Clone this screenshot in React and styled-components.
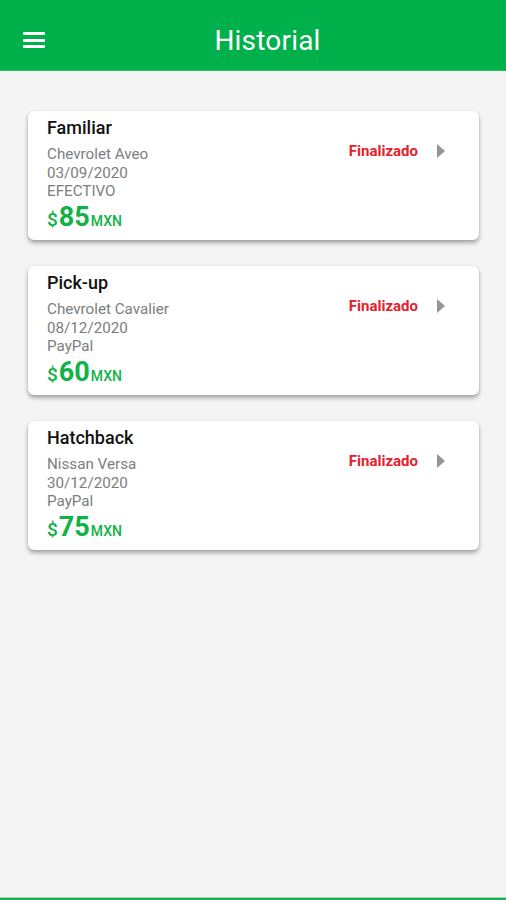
import React from "react";
import styled, { createGlobalStyle } from "styled-components";

const Global = createGlobalStyle`
  html, body { margin: 0; padding: 0; background: #f4f4f4; }
  body { font-family: Roboto, "Noto Sans", Arial, sans-serif; }
  * { box-sizing: border-box; }
`;

const Page = styled.div`
  min-height: 100vh;
  display: flex;
  flex-direction: column;
  background: #f4f4f4;
`;

const Header = styled.header`
  height: 71px;
  background: #00b04a;
  display: flex;
  align-items: center;
  padding: 11px 0 0 23px;
  border-bottom: 1px solid #28c060;
`;

const MenuButton = styled.div`
  width: 22px;
  display: flex;
  flex-direction: column;
  gap: 3.5px;
  margin-top: -1px;
  span {
    display: block;
    height: 3px;
    background: #fff;
    border-radius: 1px;
  }
`;

const Title = styled.h1`
  flex: 1;
  margin: 0;
  padding-right: 16px;
  text-align: center;
  color: #fff;
  font-weight: 400;
  font-size: 28px;
  letter-spacing: 0.2px;
`;

const List = styled.main`
  flex: 1;
  display: flex;
  flex-direction: column;
  gap: 26px;
  padding: 40px 27px 0 28px;
`;

const Card = styled.div`
  background: #fff;
  border-radius: 6px;
  height: 129px;
  box-shadow: 0 3px 4px rgba(0, 0, 0, 0.32), 0 0 2px rgba(0, 0, 0, 0.12);
  display: flex;
  justify-content: space-between;
  padding: 6px 34px 0 19px;
`;

const Info = styled.div`
  display: flex;
  flex-direction: column;
`;

const CarType = styled.div`
  font-size: 18px;
  font-weight: 500;
  color: #111;
  line-height: 22px;
  margin-bottom: 6px;
`;

const Detail = styled.div`
  font-size: 15.2px;
  color: #7d7d7d;
  line-height: 18.5px;
`;

const Price = styled.div`
  display: flex;
  align-items: baseline;
  color: #12b247;
  line-height: 30px;
  margin-top: 1px;
`;

const Dollar = styled.span`
  font-size: 19px;
  font-weight: 500;
`;

const Amount = styled.span`
  font-size: 27px;
  font-weight: 700;
  margin-left: 1px;
`;

const Currency = styled.span`
  font-size: 14px;
  font-weight: 500;
  margin-left: 1px;
`;

const Status = styled.div`
  display: flex;
  align-items: center;
  gap: 19px;
  height: 20px;
  margin-top: 24px;
`;

const StatusText = styled.span`
  color: #e5202b;
  font-size: 15px;
  font-weight: 700;
`;

const Arrow = styled.span`
  width: 0;
  height: 0;
  border-top: 7px solid transparent;
  border-bottom: 7px solid transparent;
  border-left: 8px solid #959595;
`;

const Footer = styled.div`
  height: 3px;
  background: #1faa4f;
  border-top: 1px solid #9ad9ae;
`;

const trips = [
  { type: "Familiar", car: "Chevrolet Aveo", date: "03/09/2020", pay: "EFECTIVO", amount: "85" },
  { type: "Pick-up", car: "Chevrolet Cavalier", date: "08/12/2020", pay: "PayPal", amount: "60" },
  { type: "Hatchback", car: "Nissan Versa", date: "30/12/2020", pay: "PayPal", amount: "75" },
];

export default function App() {
  return (
    <Page>
      <Global />
      <Header>
        <MenuButton>
          <span />
          <span />
          <span />
        </MenuButton>
        <Title>Historial</Title>
      </Header>
      <List>
        {trips.map((t) => (
          <Card key={t.type}>
            <Info>
              <CarType>{t.type}</CarType>
              <Detail>{t.car}</Detail>
              <Detail>{t.date}</Detail>
              <Detail>{t.pay}</Detail>
              <Price>
                <Dollar>$</Dollar>
                <Amount>{t.amount}</Amount>
                <Currency>MXN</Currency>
              </Price>
            </Info>
            <Status>
              <StatusText>Finalizado</StatusText>
              <Arrow />
            </Status>
          </Card>
        ))}
      </List>
      <Footer />
    </Page>
  );
}
